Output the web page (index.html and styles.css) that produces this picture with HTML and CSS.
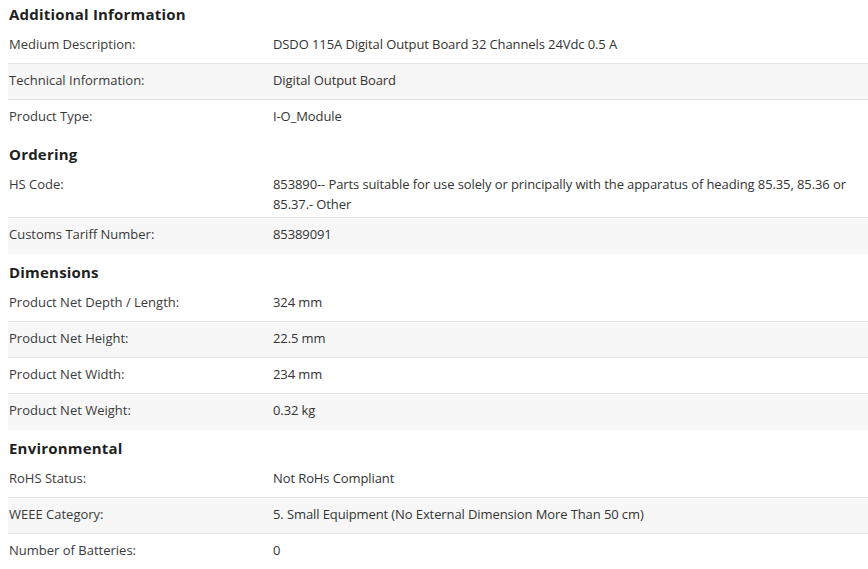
FILE: index.html
```html
<!DOCTYPE html>
<html lang="en">
<head>
<meta charset="utf-8">
<title>Additional Information</title>
<link rel="stylesheet" href="styles.css">
</head>
<body>
<div class="specs">
  <section class="group">
    <h2 class="group-title">Additional Information</h2>
    <div class="row"><div class="label">Medium Description:</div><div class="value">DSDO 115A Digital Output Board 32 Channels 24Vdc 0.5 A</div></div>
    <div class="row"><div class="label">Technical Information:</div><div class="value">Digital Output Board</div></div>
    <div class="row"><div class="label">Product Type:</div><div class="value">I-O_Module</div></div>
  </section>
  <section class="group">
    <h2 class="group-title">Ordering</h2>
    <div class="row"><div class="label">HS Code:</div><div class="value">853890-- Parts suitable for use solely or principally with the apparatus of heading 85.35, 85.36 or 85.37.- Other</div></div>
    <div class="row"><div class="label">Customs Tariff Number:</div><div class="value">85389091</div></div>
  </section>
  <section class="group">
    <h2 class="group-title">Dimensions</h2>
    <div class="row"><div class="label">Product Net Depth / Length:</div><div class="value">324 mm</div></div>
    <div class="row"><div class="label">Product Net Height:</div><div class="value">22.5 mm</div></div>
    <div class="row"><div class="label">Product Net Width:</div><div class="value">234 mm</div></div>
    <div class="row"><div class="label">Product Net Weight:</div><div class="value">0.32 kg</div></div>
  </section>
  <section class="group">
    <h2 class="group-title">Environmental</h2>
    <div class="row"><div class="label">RoHS Status:</div><div class="value">Not RoHs Compliant</div></div>
    <div class="row"><div class="label">WEEE Category:</div><div class="value">5. Small Equipment (No External Dimension More Than 50 cm)</div></div>
    <div class="row"><div class="label">Number of Batteries:</div><div class="value">0</div></div>
  </section>
</div>
</body>
</html>
```
FILE: styles.css
```css
html, body {
  margin: 0;
  padding: 0;
  background: #ffffff;
}

body {
  font-family: "Open Sans", "Noto Sans", sans-serif;
  font-size: 13px;
  color: #333333;
}

.specs {
  padding-left: 8px;
}

.group + .group {
  margin-top: 4px;
}

.group-title {
  margin: 0;
  padding: 4px 0 4px 1px;
  font-size: 15px;
  letter-spacing: 0.2px;
  line-height: 20px;
  font-weight: 700;
  color: #1f1f1f;
}

.row {
  display: grid;
  grid-template-columns: 265px 1fr;
  min-height: 36px;
  box-sizing: border-box;
  padding: 6px 8px 3px 0;
  line-height: 20px;
}

.row:not(:last-child) {
  border-bottom: 1px solid #e3e3e3;
}

.row:nth-of-type(even) {
  background: #f7f7f7;
}

.label {
  padding-left: 1px;
  color: #3a3a3a;
}

.value {
  color: #333333;
  letter-spacing: -0.1px;
}
```
